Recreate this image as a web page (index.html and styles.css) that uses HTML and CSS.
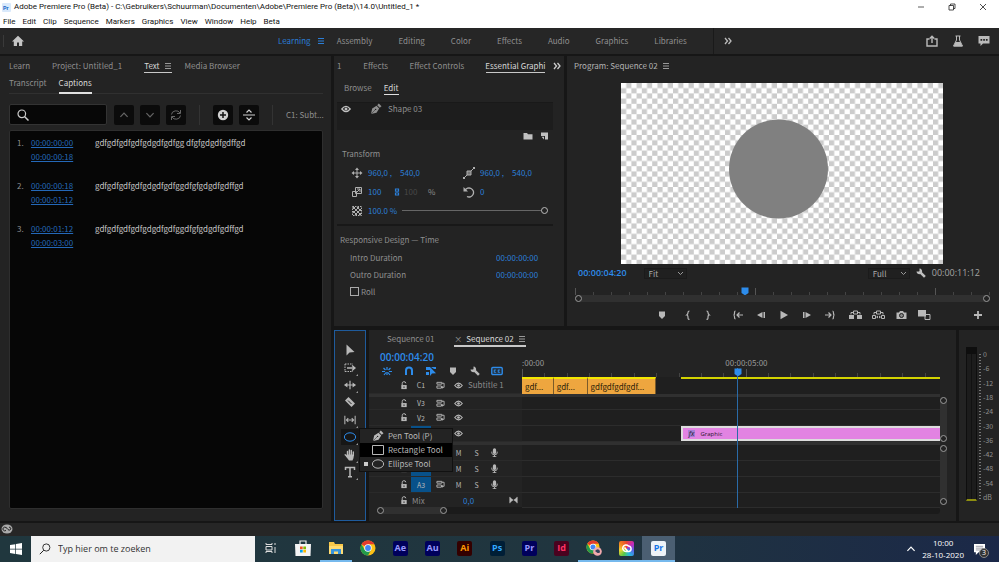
FILE: index.html
```html
<!DOCTYPE html>
<html lang="en">
  <head>
    <meta charset="UTF-8" />
    <meta name="viewport" content="width=device-width, initial-scale=1.0" />
    <title>Adobe Premiere Pro (Beta)</title>
    <link rel="stylesheet" href="styles.css">
  </head>
  <body>
    <svg class="sprite" aria-hidden="true">
      <symbol id="i-menu" viewBox="0 0 8 8"><path d="M1 1.500h6M1 4h6M1 6.500h6" stroke="currentColor" /></symbol>
      <symbol id="i-more" viewBox="0 0 8 8"><path d="M1 1l2.500 3L1 7M4.500 1L7 4 4.500 7" fill="none" stroke="currentColor" stroke-width="1.300" /></symbol>
      <symbol id="i-up" viewBox="0 0 10 10"><path d="M2 6.500l3-3 3 3" fill="none" stroke="currentColor" /></symbol>
      <symbol id="i-down" viewBox="0 0 10 10"><path d="M2 3.500l3 3 3-3" fill="none" stroke="currentColor" /></symbol>
      <symbol id="i-search" viewBox="0 0 12 12"><circle cx="4.800" cy="4.800" r="3.800" fill="none" stroke="currentColor" stroke-width="1.200" /><path d="M7.500 7.500L11.500 11.500" stroke="currentColor" stroke-width="1.500" /></symbol>
      <symbol id="i-eye" viewBox="0 0 10 10"><path d="M.8 5Q5-.2 9.200 5 5 10.200.8 5z" fill="none" stroke="currentColor" stroke-width="1.200" /><circle cx="5" cy="5" r="1.500" fill="currentColor" /></symbol>
      <symbol id="i-pen" viewBox="0 0 12 12"><path d="M1 11L2.200 5.500 6.500 2.800 9.200 5.500 6.500 9.800z" fill="currentColor" /><path d="M7.200 2.200L8.800.5 11.500 3.200 9.800 4.800z" fill="currentColor" /><path d="M1 11l4-4" stroke="#222" stroke-width=".5" /><circle cx="5.600" cy="6.400" r=".7" fill="#222" /></symbol>
      <symbol id="i-lock" viewBox="0 0 8 10"><path d="M2 4.500V3a2 2 0 0 1 4-.5" fill="none" stroke="currentColor" stroke-width="1.100" /><path d="M1 4.500h6V9H1z" fill="currentColor" /><path d="M4 6v1.800" stroke="#222" /></symbol>
      <symbol id="i-sync" viewBox="0 0 10 10"><path d="M1 1.500h5.500v2H1zM1 5.500h5v2.500H1zM6.500 2.500H9V7H6" fill="none" stroke="currentColor" /><path d="M5.500 7l2-1.500v3z" fill="currentColor" /></symbol>
      <symbol id="i-mic" viewBox="0 0 8 10"><rect x="2.200" y=".3" width="3.600" height="6.400" rx="1.800" fill="currentColor" /><path d="M1 4v1.500Q1 7.500 4 7.500T7 5.500V4M4 7.500V10M2 9.600h4" fill="none" stroke="currentColor" /></symbol>
      <symbol id="i-marker" viewBox="0 0 10 10"><path d="M2 1.500h6V6L5 9 2 6z" fill="currentColor" /></symbol>
      <symbol id="i-head" viewBox="0 0 8 8"><path d="M.5.5h7V6L4.500 8h-1L.5 6z" fill="currentColor" /></symbol>
      <symbol id="i-wrench" viewBox="0 0 10 10"><path d="M.5 3.500A2.800 2.800 0 0 0 4.200 6L8 9.800 9.800 8 6 4.200A2.800 2.800 0 0 0 3.500.5V3L3 3.500z" fill="currentColor" /></symbol>
      <symbol id="i-ellipse" viewBox="0 0 14 12"><ellipse cx="7" cy="6" rx="5.600" ry="4.200" fill="none" stroke="currentColor" /></symbol>
      <symbol id="i-chrome" viewBox="0 0 16 16"><circle cx="8" cy="8" r="7.500" fill="#fbc116" /><path d="M8 8L1.500 4.250A7.500 7.500 0 0 1 14.500 4.250H8z" fill="#e33b2e" /><path d="M1.500 4.250A7.500 7.500 0 0 0 8 15.500L11 10 4.750 10z" fill="#229a4c" /><circle cx="8" cy="8" r="3.700" fill="#fff" /><circle cx="8" cy="8" r="2.900" fill="#4285f4" /></symbol>
    </svg>

    <header class="titlebar">
      <svg class="app-icon" viewBox="0 0 9 9"><rect width="9" height="9" rx="1" fill="#d9e9fb" /><text x="1" y="6.500" font-size="5.500" font-weight="bold" fill="#1667c9">Pr</text></svg>
      <span class="title">Adobe Premiere Pro (Beta) - C:\Gebruikers\Schuurman\Documenten\Adobe\Premiere Pro (Beta)\14.0\Untitled_1 *</span>
      <button aria-label="Minimize"><svg viewBox="0 0 8 8"><path d="M1 4h6" stroke="#333" stroke-width=".8" /></svg></button>
      <button aria-label="Restore"><svg viewBox="0 0 8 8"><path d="M1 2.500h4.500V7H1zM2.500 2.500V1H7v4.500H5.500" fill="none" stroke="#222" stroke-width=".8" /></svg></button>
      <button aria-label="Close"><svg viewBox="0 0 8 8"><path d="M1 1l6 6M7 1L1 7" stroke="#222" stroke-width=".8" /></svg></button>
    </header>
    <nav class="menubar">
      <button>File</button><button>Edit</button><button>Clip</button><button>Sequence</button><button>Markers</button><button>Graphics</button><button>View</button><button>Window</button><button>Help</button><button>Beta</button>
    </nav>

    <nav class="workspaces">
      <button class="home" aria-label="Home"><svg viewBox="0 0 12 12"><path d="M6 .8L0 6.500h1.800V11H5V7.500h2V11h3.200V6.500H12z" fill="currentColor" /></svg></button>
      <div class="workspace-list">
        <button class="active">Learning <svg class="ic8"><use href="#i-menu" /></svg></button>
        <button>Assembly</button><button>Editing</button><button>Color</button><button>Effects</button><button>Audio</button><button>Graphics</button><button>Libraries</button>
      </div>
      <button class="overflow" aria-label="More workspaces"><svg class="ic8"><use href="#i-more" /></svg></button>
      <div class="quick">
        <button aria-label="Export"><svg viewBox="0 0 12 12"><path d="M3.500 4H1v7h10V4H8.500M6 8V1.500M3.800 3.500L6 1.200l2.200 2.300" fill="none" stroke="currentColor" stroke-width="1.400" /></svg></button>
        <button aria-label="Beta features"><svg viewBox="0 0 12 12"><path d="M3.500 1h5M4.500 1v4L1.500 11h9L7.500 5V1" fill="none" stroke="currentColor" /><path d="M3.500 7h5l2 4.500h-9z" fill="currentColor" /></svg></button>
        <button aria-label="Feedback"><svg viewBox="0 0 12 12"><path d="M.5 1h11v7.500H5L2.500 11V8.500h-2z" fill="currentColor" /><path d="M2.500 4h1.700v1.700H2.500zM5.200 4h1.700v1.700H5.200zM7.900 4h1.700v1.700H7.900z" fill="#222" /></svg></button>
      </div>
    </nav>

    <main class="workspace">
      <section class="panel text-panel">
        <div class="tabs text-tabs">
          <button>Learn</button>
          <button>Project: Untitled_1</button>
          <button class="active">Text <svg class="ic8"><use href="#i-menu" /></svg></button>
          <button>Media Browser</button>
        </div>
        <div class="subtabs">
          <button>Transcript</button>
          <button class="active">Captions</button>
        </div>
        <div class="caption-tools">
          <label class="search"><svg class="ic12"><use href="#i-search" /></svg><input type="search" aria-label="Search captions"></label>
          <button class="square dim" aria-label="Previous"><svg class="ic12"><use href="#i-up" /></svg></button>
          <button class="square dim" aria-label="Next"><svg class="ic12"><use href="#i-down" /></svg></button>
          <button class="square dim" aria-label="Replace"><svg class="ic12" viewBox="0 0 12 12"><path d="M1.500 5.500A4.500 4 0 0 1 10 4M10.500 6.500A4.500 4 0 0 1 2 8M10.500 1v3.500H7M1.500 11V7.500H5" fill="none" stroke="currentColor" /></svg></button>
          <span class="divider"></span>
          <button class="square" aria-label="Add caption"><svg class="ic12" viewBox="0 0 12 12"><circle cx="6" cy="6" r="5.200" fill="currentColor" /><path d="M6 3v6M3 6h6" stroke="#111" stroke-width="1.500" /></svg></button>
          <button class="square" aria-label="Split caption"><svg class="ic12" viewBox="0 0 12 12"><path d="M0 6h12M3.500 3.500L6 1l2.500 2.500M3.500 8.500L6 11l2.500-2.500" fill="none" stroke="currentColor" stroke-width="1.200" /></svg></button>
          <span class="divider"></span>
          <span class="track-name">C1: Subt...</span>
        </div>
        <ol class="captions">
          <li><span>1.</span><div class="times"><a href="#">00:00:00:00</a><a href="#">00:00:00:18</a></div><p>gdfgdfgdfgdfgdgdfgdfgg dfgfgdgdfgdffgd</p></li>
          <li><span>2.</span><div class="times"><a href="#">00:00:00:18</a><a href="#">00:00:01:12</a></div><p>gdfgdfgdfgdfgdgdfgdfggdfgfgdgdfgdffgd</p></li>
          <li><span>3.</span><div class="times"><a href="#">00:00:01:12</a><a href="#">00:00:03:00</a></div><p>gdfgdfgdfgdfgdgdfgdfggdfgfgdgdfgdffgd</p></li>
        </ol>
      </section>

      <div class="right-side">
        <div class="top-row">
          <section class="panel graphics-panel">
            <div class="tabs graphics-tabs">
              <button>1</button>
              <button>Effects</button>
              <button>Effect Controls</button>
              <button class="active">Essential Graphi</button>
              <button class="overflow" aria-label="More panels"><svg class="ic8"><use href="#i-more" /></svg></button>
            </div>
            <div class="subtabs small"><button>Browse</button><button class="active">Edit</button></div>
            <div class="layers">
              <button class="icon" aria-label="Toggle layer"><svg class="ic10"><use href="#i-eye" /></svg></button>
              <svg class="ic12"><use href="#i-pen" /></svg>
              <span>Shape 03</span>
            </div>
            <div class="layer-actions">
              <button class="icon" aria-label="New group"><svg class="ic10" viewBox="0 0 10 10"><path d="M.5 2h3.500l1 1.200h4.500V8.500h-9z" fill="currentColor" /></svg></button>
              <button class="icon" aria-label="New layer"><svg class="ic10" viewBox="0 0 10 10"><path d="M2 1.500h7v7H6V5H2z" fill="currentColor" /><path d="M2.500 5.800L5 8.500V5.800z" fill="currentColor" /></svg></button>
            </div>
            <h2>Transform</h2>
            <div class="transform">
              <svg class="ic12" viewBox="0 0 12 12"><path d="M6 2v8M2 6h8" stroke="currentColor" /><path d="M4 3l2-2.500L8 3zM4 9l2 2.500L8 9zM3 4L.5 6 3 8zM9 4l2.500 2L9 8z" fill="currentColor" /></svg>
              <div class="pair"><input type="text" value="960,0 ," aria-label="Position X"><input type="text" value="540,0" aria-label="Position Y"></div>
              <svg class="ic12" viewBox="0 0 12 12"><path d="M1 11l10-10" stroke="currentColor" /><path d="M4 4h4v4H4z" fill="#777" stroke="currentColor" /><path d="M10 0h2v2h-2zM0 10h2v2H0z" fill="currentColor" /></svg>
              <div class="pair"><input type="text" value="960,0 ," aria-label="Anchor X"><input type="text" value="540,0" aria-label="Anchor Y"></div>
              <svg class="ic12" viewBox="0 0 12 12"><path d="M4.500 1.500h6v6h-6zM1.500 5.500h4v5h-4zM5 7l4-4M6 3h3v3" fill="none" stroke="currentColor" /></svg>
              <div class="scale"><input type="text" value="100" aria-label="Scale"><svg class="link" viewBox="0 0 8 10"><path d="M2 4.500V1h4v3.500M2 5.500V9h4V5.500M4 3v4" fill="none" stroke="#2b7fd8" stroke-width="1.600" /></svg><input class="off" type="text" value="100" aria-label="Scale width" disabled><span>%</span></div>
              <svg class="ic12" viewBox="0 0 12 12"><path d="M2 4.500A4.500 4.500 0 1 1 4 10.500" fill="none" stroke="currentColor" stroke-width="1.300" /><path d="M.5 1v4.500H5z" fill="currentColor" /></svg>
              <input type="text" value="0" aria-label="Rotation">
              <svg class="ic12" viewBox="0 0 12 12"><path d="M2 2h2v2H2zM6 2h2v2H6zM4 4h2v2H4zM8 4h2v2H8zM2 6h2v2H2zM6 6h2v2H6zM4 8h2v2H4zM8 8h2v2H8z" fill="currentColor" /><path d="M1.500 1.500h9v9h-9z" fill="none" stroke="currentColor" stroke-dasharray="1.500 1" /></svg>
              <div class="opacity"><input type="text" value="100.0 %" aria-label="Opacity"><input type="range" value="100" aria-label="Opacity slider"></div>
            </div>
            <h2 class="responsive">Responsive Design — Time</h2>
            <div class="durations">
              <label for="intro">Intro Duration</label><input id="intro" type="text" value="00:00:00:00">
              <label for="outro">Outro Duration</label><input id="outro" type="text" value="00:00:00:00">
              <label class="roll"><input type="checkbox">Roll</label>
            </div>
          </section>

          <section class="panel program-panel">
            <div class="tabs program-tabs"><button class="title-tab">Program: Sequence 02 <svg class="ic8"><use href="#i-menu" /></svg></button></div>
            <svg class="monitor" viewBox="0 0 322 181">
              <defs>
                <pattern id="checker" width="10.400" height="10.400" patternUnits="userSpaceOnUse">
                  <rect width="10.400" height="10.400" fill="#fff" />
                  <path d="M5.200 0h5.200v5.200H5.200zM0 5.200h5.200v5.200H0z" fill="#ccc" />
                </pattern>
              </defs>
              <rect width="322" height="181" fill="url(#checker)" />
              <circle cx="157.500" cy="86" r="49.500" fill="#808080" />
            </svg>
            <div class="monitor-bar">
              <span class="timecode">00:00:04:20</span>
              <select class="zoom" aria-label="Zoom level"><option>Fit</option></select>
              <select class="resolution" aria-label="Playback resolution"><option>Full</option></select>
              <button class="icon" aria-label="Settings"><svg class="ic10"><use href="#i-wrench" /></svg></button>
              <span class="duration">00:00:11:12</span>
            </div>
            <div class="mini-ruler"><svg class="playhead"><use href="#i-head" /></svg></div>
            <div class="zoombar"><i></i><i></i></div>
            <div class="transport">
              <div class="transport-main">
                <button aria-label="Add marker"><svg><use href="#i-marker" /></svg></button>
                <div class="group tight">
                  <button aria-label="Mark in"><svg viewBox="0 0 10 10"><path d="M6.500 1Q5 1 5 2.500T3.800 5Q5 5 5 7.500T6.500 9" fill="none" stroke="currentColor" stroke-width="1.200" /></svg></button>
                  <button aria-label="Mark out"><svg viewBox="0 0 10 10"><path d="M3.500 1Q5 1 5 2.500T6.200 5Q5 5 5 7.500T3.500 9" fill="none" stroke="currentColor" stroke-width="1.200" /></svg></button>
                </div>
                <div class="group">
                  <button aria-label="Go to in"><svg viewBox="0 0 10 10"><path d="M2.500 1Q1.500 1 1.500 3T.5 5Q1.500 5 1.500 7T2.500 9M4 5h6M6.500 2.500L4 5l2.500 2.500" fill="none" stroke="currentColor" stroke-width="1.200" /></svg></button>
                  <button aria-label="Step back"><svg viewBox="0 0 10 10"><path d="M6.500 2v6L1 5zM7.500 2H9v6H7.500z" fill="currentColor" /></svg></button>
                  <button aria-label="Play"><svg viewBox="0 0 10 10"><path d="M1.500.8v8.400L9 5z" fill="currentColor" /></svg></button>
                  <button aria-label="Step forward"><svg viewBox="0 0 10 10"><path d="M3.500 2v6L9 5zM1 2h1.500v6H1z" fill="currentColor" /></svg></button>
                  <button aria-label="Go to out"><svg viewBox="0 0 10 10"><path d="M7.500 1q1 0 1 2t1 2q-1 0-1 2t-1 2M0 5h6M3.500 2.500L6 5 3.500 7.500" fill="none" stroke="currentColor" stroke-width="1.200" /></svg></button>
                </div>
                <div class="group wide">
                  <button aria-label="Lift"><svg viewBox="0 0 13 10"><path d="M0 5h5v4H0zM8 5h5v4H8z" fill="currentColor" /><path d="M4.500 1h4v3h-4zM2 4.500V2.500h2.500M11 4.500V2.500H8.500" fill="none" stroke="currentColor" /></svg></button>
                  <button aria-label="Extract"><svg viewBox="0 0 13 10"><path d="M.5 5.500h3v3h-3zM9.500 5.500h3v3h-3zM4.500 1h4v3h-4zM2 4.500V2.500h2.500M11 4.500V2.500H8.500" fill="none" stroke="currentColor" /><path d="M4 7l2-1.500v3zM9 7L7 5.500v3z" fill="currentColor" /></svg></button>
                  <button aria-label="Export frame"><svg viewBox="0 0 13 10"><path d="M1.500 2.500H4L5 1h3l1 1.500h2.500V9h-10z" fill="currentColor" /><circle cx="6.500" cy="5.500" r="2" fill="#888" stroke="#222" /></svg></button>
                  <button aria-label="Comparison view"><svg viewBox="0 0 13 10"><path d="M7 4.500h5v5H7z" fill="#222" stroke="currentColor" /><path d="M0 0h8v6.500H0z" fill="currentColor" /></svg></button>
                </div>
              </div>
              <button class="add" aria-label="Button editor"><svg viewBox="0 0 10 10"><path d="M5 1v8M1 5h8" stroke="currentColor" stroke-width="1.800" /></svg></button>
            </div>
          </section>
        </div>

        <div class="bottom-row">
          <section class="panel tools">
            <button aria-label="Selection tool"><svg viewBox="0 0 12 12"><path d="M2.500.5v11L5.500 8.500l5-.5z" fill="currentColor" /></svg></button>
            <button class="more" aria-label="Track select"><svg viewBox="0 0 12 12"><path d="M1 2h8M1 9.500h8" stroke="currentColor" stroke-dasharray="1.500 1" /><path d="M1 2v8" stroke="currentColor" stroke-dasharray="1.500 1" /><path d="M3 6h7M8 3.500L11 6 8 8.500" fill="none" stroke="currentColor" stroke-width="1.400" /></svg></button>
            <button class="more" aria-label="Ripple edit"><svg viewBox="0 0 14 12"><path d="M7 1v10M1 6h12" stroke="currentColor" stroke-width="1.400" /><path d="M0 6l4-3v6zM14 6l-4-3v6z" fill="currentColor" /></svg></button>
            <button aria-label="Razor"><svg viewBox="0 0 12 12"><path d="M1 4.500L4.500 1 11 7.500 7.500 11z" fill="currentColor" /><path d="M4 4.500L7.500 8" stroke="#222" /></svg></button>
            <button class="more" aria-label="Slip"><svg viewBox="0 0 14 12"><path d="M1 1v10M13 1v10M3 6h8M5 3.800L2.800 6 5 8.200M9 3.800L11.200 6 9 8.200" fill="none" stroke="currentColor" stroke-width="1.200" /></svg></button>
            <div class="tool-slot">
              <button class="more selected" aria-label="Shape tool"><svg><use href="#i-ellipse" /></svg></button>
              <div class="flyout">
                <button><i></i><svg><use href="#i-pen" /></svg>Pen Tool (P)</button>
                <button class="hover"><i></i><svg viewBox="0 0 14 12"><path d="M1.500 1.500h11v9h-11z" fill="none" stroke="currentColor" /></svg>Rectangle Tool</button>
                <button class="checked"><i></i><svg><use href="#i-ellipse" /></svg>Ellipse Tool</button>
              </div>
            </div>
            <button class="more" aria-label="Hand"><svg viewBox="0 0 12 12"><path d="M3.500 6V2.500M5.400 6V1M7.300 6V1.500M9.300 6.500V3M3.500 8L1.200 5.800" stroke="currentColor" stroke-width="1.400" stroke-linecap="round" /><path d="M2.800 5.500h7.200L9.500 9l-1 2.500H5L2 7.500z" fill="currentColor" /></svg></button>
            <button class="more" aria-label="Type"><svg viewBox="0 0 12 12"><path d="M1.500 4V1.500h9V4M6 1.500v9M4 10.700h4" fill="none" stroke="currentColor" stroke-width="1.500" /></svg></button>
          </section>

          <section class="panel timeline">
            <div class="tabs sequence-tabs">
              <button>Sequence 01</button>
              <button class="active"><b>×</b>Sequence 02 <svg class="ic8"><use href="#i-menu" /></svg></button>
            </div>
            <div class="timeline-body">
              <div class="heads">
                <div class="head-top">
                  <span class="timecode">00:00:04:20</span>
                  <div class="toggles">
                    <button aria-label="Nest"><svg viewBox="0 0 10 10"><path d="M5 1v3M1.500 2l2 2M8.500 2l-2 2M0 5.500h3M10 5.500H7M2 9l2-2.500M8 9L6 6.500M5 6v3" stroke="currentColor" stroke-width="1.200" /></svg></button>
                    <button aria-label="Snap"><svg viewBox="0 0 10 10"><path d="M2 9V4.500a3 3 0 0 1 6 0V9" fill="none" stroke="currentColor" stroke-width="2" /></svg></button>
                    <button aria-label="Linked selection"><svg viewBox="0 0 10 10"><path d="M0 1h4v3H0zM0 6h3v3H0zM5 1h5v2H8z" fill="currentColor" /><path d="M4 1v9l2-2.500 4-.3z" fill="currentColor" /></svg></button>
                    <button class="grey" aria-label="Marker"><svg><use href="#i-marker" /></svg></button>
                    <button class="grey" aria-label="Display settings"><svg><use href="#i-wrench" /></svg></button>
                    <button aria-label="Captions"><svg viewBox="0 0 12 10"><rect x=".8" y="1.500" width="10.400" height="7" rx="1" fill="none" stroke="currentColor" stroke-width="1.400" /><path d="M5.300 4H3.200v2.200h2.100M9.300 4H7.200v2.200h2.100" fill="none" stroke="currentColor" stroke-width="1.100" /></svg></button>
                  </div>
                </div>
                <div class="track"><svg class="lock"><use href="#i-lock" /></svg><span class="target off">C1</span><svg><use href="#i-sync" /></svg><svg><use href="#i-eye" /></svg><span class="name">Subtitle 1</span></div>
                <div class="split"></div>
                <div class="track short"><svg class="lock"><use href="#i-lock" /></svg><span class="target off">V3</span><svg><use href="#i-sync" /></svg><svg><use href="#i-eye" /></svg></div>
                <div class="track"><svg class="lock"><use href="#i-lock" /></svg><span class="target off">V2</span><svg><use href="#i-sync" /></svg><svg><use href="#i-eye" /></svg></div>
                <div class="track"><svg class="lock"><use href="#i-lock" /></svg><span class="target"></span><svg><use href="#i-sync" /></svg><svg><use href="#i-eye" /></svg></div>
                <div class="split"></div>
                <div class="track"><svg class="lock"><use href="#i-lock" /></svg><span class="target"></span><svg><use href="#i-sync" /></svg><button>M</button><button>S</button><svg><use href="#i-mic" /></svg></div>
                <div class="track"><svg class="lock"><use href="#i-lock" /></svg><span class="target">A2</span><svg><use href="#i-sync" /></svg><button>M</button><button>S</button><svg><use href="#i-mic" /></svg></div>
                <div class="track"><svg class="lock"><use href="#i-lock" /></svg><span class="target">A3</span><svg><use href="#i-sync" /></svg><button>M</button><button>S</button><svg><use href="#i-mic" /></svg></div>
                <div class="track mix"><svg class="lock"><use href="#i-lock" /></svg><span class="name">Mix</span><input type="text" value="0,0" aria-label="Mix volume"><svg viewBox="0 0 10 10"><path d="M1 1v7M9 1v7" stroke="currentColor" /><path d="M1 1.500l4 3 4-3v6l-4-3-4 3z" fill="currentColor" /></svg></div>
              </div>
              <div class="lanes">
                <div class="ruler"><span class="start">:00:00</span><span class="mark" style="left: 53.700%">00:00:05:00</span></div>
                <div class="lane subtitles">
                  <div class="caption-clip" style="width: 7.600%">gdf...</div>
                  <div class="caption-clip" style="width: 8.100%">gdf...</div>
                  <div class="caption-clip" style="width: 16.400%">gdfgdfgdfgdf...</div>
                  <div class="render" style="width: 62%"></div>
                </div>
                <div class="split"></div>
                <div class="lane short"></div>
                <div class="lane"></div>
                <div class="lane video"><div class="clip" style="width: 62%"><em>fx</em>Graphic</div></div>
                <div class="split"></div>
                <div class="lane"></div>
                <div class="lane"></div>
                <div class="lane"></div>
                <div class="lane mix"></div>
                <div class="time-head" style="left: 51.400%"><svg><use href="#i-head" /></svg></div>
              </div>
              <div class="scrolls">
                <div class="vscroll"><i></i><i></i></div>
                <div class="vscroll audio"><i></i><i></i></div>
              </div>
            </div>
            <div class="hscroll"><div class="thumb"><i></i><i></i></div></div>
          </section>

          <section class="panel meters">
            <div class="meter"></div>
            <div class="scale-ticks"></div>
            <div class="levels"><span>0</span><span>-6</span><span>-12</span><span>-18</span><span>-24</span><span>-30</span><span>-36</span><span>-42</span><span>-48</span><span>-54</span><span>dB</span></div>
          </section>
        </div>
      </div>
    </main>

    <footer class="status"><svg viewBox="0 0 12 10"><ellipse cx="6" cy="5" rx="5.500" ry="4.500" fill="#aaa" /><path d="M5 6.500a2 1.800 0 1 1 0-3q1 .5 2 2t2.500 0-1.500-2.500" fill="none" stroke="#222" /></svg></footer>

    <footer class="taskbar">
      <button class="start-button" aria-label="Start"><svg viewBox="0 0 12 12"><path d="M0 2l5.300-.8v4.500H0zM6 1l6-.9v5.600H6zM0 6.400h5.300v4.500L0 10.100zM6 6.400h6V12l-6-.9z" fill="#fff" /></svg></button>
      <label class="task-search"><svg viewBox="0 0 12 12"><circle cx="7.300" cy="4.500" r="3.600" fill="none" stroke="#222" stroke-width=".9" /><path d="M4.800 7.200L.8 11.200" stroke="#222" /></svg><input type="text" placeholder="Typ hier om te zoeken" aria-label="Search Windows"></label>
      <div class="apps">
        <button aria-label="Task view"><svg class="ic12" viewBox="0 0 12 12"><path d="M1 1v1.500h6V1M1 11V9.500h6V11M1 4.500h6v3.500H1zM10 1v2M10 5v6" fill="none" stroke="#ddd" /></svg></button>
        <button aria-label="Store"><svg viewBox="0 0 16 16"><path d="M5 4V1h6v3" fill="none" stroke="#eee" stroke-width="1.200" /><path d="M0 4h16l-.5 12H.5z" fill="#f4f4f4" /><path d="M5 6.500h2.700v2.700H5z" fill="#f25022" /><path d="M8.300 6.500H11v2.700H8.300z" fill="#7fba00" /><path d="M5 9.800h2.700v2.700H5z" fill="#00a4ef" /><path d="M8.300 9.800H11v2.700H8.300z" fill="#ffb900" /></svg></button>
        <button class="open" aria-label="Explorer"><svg viewBox="0 0 16 16"><path d="M1 2h5l1 2h8v10H1z" fill="#f8c84a" /><path d="M1 6h14v8H1z" fill="#ffdc73" /><path d="M3 9h10v5h-3v-2.500H6V14H3z" fill="#3795df" /></svg></button>
        <button aria-label="Chrome"><svg><use href="#i-chrome" /></svg></button>
        <button><b class="badge purple">Ae</b></button>
        <button><b class="badge purple">Au</b></button>
        <button><b class="badge orange">Ai</b></button>
        <button><b class="badge blue">Ps</b></button>
        <button><b class="badge purple">Pr</b></button>
        <button><b class="badge pink">Id</b></button>
        <button class="open" aria-label="Chrome profile"><svg viewBox="0 0 16 16"><use href="#i-chrome" width="14" height="14" /><circle cx="11.500" cy="11.500" r="4.300" fill="#f0a9ae" /><path d="M9 11q3-3.500 5 0l-.5 2h-2z" fill="#33415a" /></svg></button>
        <button class="open" aria-label="Creative Cloud"><span class="badge cloud"><svg viewBox="0 0 16 16"><path d="M8 11.500a3.300 3.300 0 1 1 2.500-5.500 2.800 2.800 0 0 1 .5 5.500zM9.500 11L6.500 7.500" fill="none" stroke="#fff" stroke-width="1.500" /></svg></span></button>
        <button class="open current"><b class="badge white">Pr</b></button>
      </div>
      <div class="tray">
        <button aria-label="Hidden icons"><svg class="ic12"><use href="#i-up" /></svg></button>
        <time>10:00<br>28-10-2020</time>
        <button class="notify" aria-label="3 notifications"><svg viewBox="0 0 12 12"><path d="M0 0h12v9H5l-3 3V9H0z" fill="#fff" /><path d="M2 2.500h8M2 4.500h8M2 6.500h5" stroke="#667" stroke-width=".7" /></svg><span>3</span></button>
      </div>
    </footer>
  </body>
</html>
```
FILE: styles.css
```css
* {
  box-sizing: border-box;
}
body {
  margin: 0;
  min-height: 100vh;
  display: flex;
  flex-direction: column;
  background: #161616;
  color: #8f8f8f;
  font-family: "Noto Sans CJK SC", Lato, sans-serif;
  font-size: 8px;
  line-height: 12px;
}
button, input, select {
  margin: 0;
  padding: 0;
  border: 0;
  background: none;
  color: inherit;
  font: inherit;
  min-width: 0;
}
button {
  display: flex;
  align-items: center;
  justify-content: center;
  white-space: nowrap;
}
svg {
  display: block;
  flex: none;
}
.sprite {
  position: absolute;
  width: 0;
  height: 0;
}
.ic8 { width: 8px; height: 8px; }
.ic10 { width: 10px; height: 10px; }
.ic12 { width: 12px; height: 12px; }

/* window chrome */
.titlebar,
.menubar {
  display: flex;
  align-items: center;
  height: 14px;
  background: #fff;
  color: #111;
  font-family: Roboto, sans-serif;
}
.titlebar {
  padding: 0 2px 0 2px;
  gap: 3px;
}
.titlebar .title {
  flex: 1;
}
.titlebar svg {
  width: 8px;
  height: 8px;
}
.titlebar .app-icon {
  width: 9px;
  height: 9px;
}
.titlebar button {
  width: 28px;
}
.menubar {
  padding: 2px 0 0 3px;
  gap: 7px;
}

.workspaces {
  display: flex;
  align-items: center;
  height: 28px;
  background: #262626;
  border-bottom: 2px solid #161616;
}
.home {
  width: 274px;
  padding-left: 8px;
  justify-content: flex-start;
  color: #c4c4c4;
}
.home::before {
  content: "";
  height: 12px;
  margin-left: -5px;
  border-left: 1px solid #3a3a3a;
  margin-right: 8px;
}
.home svg,
.quick svg {
  width: 12px;
  height: 12px;
}
.workspace-list {
  display: flex;
  gap: 26px;
  padding: 0 26px 0 4px;
}
.workspace-list .active {
  color: #2b7fd8;
  gap: 6px;
  margin-right: -14px;
}
.workspaces .overflow {
  padding-left: 10px;
  height: 26px;
  border-left: 1px solid #1a1a1a;
  color: #bbb;
}
.quick {
  margin-left: auto;
  display: flex;
  gap: 14px;
  padding-right: 9px;
  color: #bbb;
}

/* panels */
.workspace {
  flex: 1;
  display: grid;
  grid-template-columns: minmax(0, 331fr) minmax(0, 665fr);
  gap: 3px;
  padding-bottom: 2px;
}
.right-side {
  display: grid;
  grid-template-rows: 269fr 190fr;
  gap: 4px;
  min-width: 0;
}
.top-row {
  display: grid;
  grid-template-columns: 230px 1fr;
  gap: 3px;
}
.bottom-row {
  display: grid;
  grid-template-columns: 32px 1fr 40px;
  gap: 3px;
}
.panel {
  background: #232323;
  min-width: 0;
}
.tabs {
  display: flex;
  align-items: flex-start;
  height: 20px;
  padding-top: 3px;
}
.tabs button {
  height: 14px;
  border-bottom: 1px solid transparent;
}
.tabs .active {
  color: #d8d8d8;
  border-color: #c8c8c8;
}
.tabs .ic8 {
  margin-left: 4px;
  color: #999;
}
.icon {
  color: #c0c0c0;
}

/* captions */
.text-panel {
  display: flex;
  flex-direction: column;
  padding: 0 8px 12px 9px;
}
.text-tabs {
  gap: 22px;
  height: 18px;
}
.text-tabs .active {
  margin-right: -9px;
}
.subtabs {
  display: flex;
  gap: 12px;
  height: 20px;
  border-bottom: 1px solid #303030;
}
.subtabs button {
  height: 20px;
  border-bottom: 2px solid transparent;
}
.subtabs .active {
  color: #d8d8d8;
  border-color: #e0e0e0;
}
.caption-tools {
  display: flex;
  align-items: center;
  gap: 6px;
  padding: 10px 0 5px;
}
.search {
  display: flex;
  align-items: center;
  flex: none;
  width: 98px;
  height: 21px;
  margin-right: 1px;
  padding: 0 7px;
  border: 1px solid #333;
  border-radius: 2px;
  background: #070707;
  color: #ccc;
}
.search input {
  flex: 1;
}
.square {
  flex: none;
  width: 20px;
  height: 20px;
  border-radius: 2px;
  background: #0b0b0b;
  color: #d0d0d0;
}
.square.dim {
  color: #666;
}
.divider {
  height: 20px;
  margin: 0 7px;
  border-left: 1px solid #333;
}
.track-name {
  white-space: nowrap;
}
.captions {
  flex: 1;
  margin: 0;
  padding: 5px 7px;
  list-style: none;
  border: 1px solid #2e2e2e;
  border-radius: 2px;
  background: #060606;
  line-height: 14px;
}
.captions li {
  display: grid;
  grid-template-columns: 14px 64px 1fr;
  margin-bottom: 15px;
}
.captions a {
  display: block;
  color: #2468b8;
}
.captions p {
  margin: 0;
  color: #c8c8c8;
}

/* essential graphics */
.graphics-panel {
  padding: 0 11px 0 3px;
}
.graphics-tabs {
  gap: 22px;
  margin-right: -8px;
}
.graphics-tabs .overflow {
  margin-left: auto;
}
.graphics-tabs .active + .overflow {
  margin-left: -14px;
}
.graphics-tabs .overflow .ic8 {
  margin: 0;
  color: #ccc;
}
.subtabs.small {
  height: 26px;
  padding: 6px 7px 0;
  border: 0;
}
.subtabs.small button {
  height: 13px;
  border-bottom-width: 1px;
}
.layers {
  display: flex;
  align-items: flex-start;
  height: 28px;
  padding: 0 4px;
  background: #1d1d1d;
  border-top: 1px solid #191919;
}
.layers svg {
  margin-top: 1px;
}
.layers .ic12 {
  margin: 0 6px 0 19px;
}
.layer-actions {
  display: flex;
  justify-content: flex-end;
  gap: 6px;
  padding: 1px 4px;
}
.graphics-panel h2 {
  margin: 0;
  padding: 6px 5px 3px;
  font-size: 8px;
  font-weight: normal;
}
.transform {
  display: grid;
  grid-template-columns: 12px 90px 12px 1fr;
  grid-auto-rows: 19px;
  align-items: center;
  column-gap: 5px;
  padding: 0 5px 4px 14px;
  border-bottom: 2px solid #181818;
}
.transform > svg {
  color: #b0b0b0;
}
.transform input,
.durations input[type="text"],
.mix input {
  color: #2b7fd8;
}
.pair,
.scale,
.opacity {
  display: flex;
  align-items: center;
}
.pair input {
  width: 32px;
}
.scale input {
  width: 26px;
}
.scale .link {
  width: 6px;
  height: 10px;
  margin-right: 4px;
}
.transform input.off {
  color: #484848;
  width: 24px;
}
.opacity {
  grid-column: 2 / -1;
}
.opacity input[type="text"] {
  width: 34px;
}
.opacity input[type="range"] {
  flex: 1;
  height: 8px;
  appearance: none;
}
.opacity input::-webkit-slider-runnable-track {
  height: 1px;
  background: #666;
}
.opacity input::-webkit-slider-thumb {
  appearance: none;
  width: 7px;
  height: 7px;
  margin-top: -3px;
  border: 1px solid #bbb;
  border-radius: 50%;
  background: #232323;
}
.graphics-panel .responsive {
  padding: 8px 3px 3px;
}
.durations {
  display: grid;
  grid-template-columns: 1fr 57px;
  grid-auto-rows: 17px;
  align-items: center;
  padding-left: 13px;
}
.roll {
  display: flex;
  align-items: center;
  gap: 2px;
}
.roll input {
  appearance: none;
  width: 9px;
  height: 9px;
  border: 1px solid #aaa;
}

/* program monitor */
.program-panel {
  display: flex;
  flex-direction: column;
}
.program-tabs {
  padding-left: 7px;
}
.program-tabs .title-tab {
  color: #b4b4b4;
}
.monitor {
  margin: 7px 56px 0 54px;
}
.monitor-bar {
  display: flex;
  align-items: center;
  height: 18px;
  padding: 0 19px 0 11px;
}
.timecode {
  color: #2d8ceb;
  font: 600 9px/12px "Open Sans", sans-serif;
}
.monitor-bar select {
  height: 11px;
  padding: 0 4px;
  border: 1px solid #1b1b1b;
  background: #202020 url("data:image/svg+xml,%3Csvg xmlns='http://www.w3.org/2000/svg' width='7' height='5'%3E%3Cpath d='M1 1l2.500 2.500L6 1' fill='none' stroke='%23999'/%3E%3C/svg%3E") right 2px center no-repeat;
  color: #aaa;
  line-height: 9px;
  appearance: none;
}
.zoom {
  width: 43px;
  margin: 0 auto 0 17px;
}
.resolution {
  width: 42px;
  margin-right: 9px;
}
.monitor-bar .icon {
  margin-left: -3px;
}
.duration {
  margin-left: 6px;
  color: #a5a5a5;
  font: 9px/12px "Open Sans", sans-serif;
}
.mini-ruler {
  height: 13px;
  margin: 0 8px;
  position: relative;
  background:
    repeating-linear-gradient(90deg, #555 0 1px, transparent 1px 180px) 0 100% / 100% 7px no-repeat,
    repeating-linear-gradient(90deg, #444 0 1px, transparent 1px 18px) 0 100% / 100% 3px no-repeat;
}
.playhead {
  position: absolute;
  left: 40%;
  bottom: 0;
  width: 8px;
  height: 8px;
  color: #2d8ceb;
}
.zoombar,
.thumb {
  display: flex;
  justify-content: space-between;
  align-items: center;
  height: 7px;
  border-radius: 4px;
  background: #303030;
}
.zoombar {
  margin: 0 9px 0 8px;
}
.zoombar i,
.thumb i,
.vscroll i {
  width: 7px;
  height: 7px;
  border: 1px solid #999;
  border-radius: 50%;
  background: #232323;
}
.transport {
  display: grid;
  grid-template-columns: 1fr auto 1fr;
  padding: 3px 11px 0 31px;
  color: #b8b8b8;
}
.transport-main {
  grid-column: 2;
  display: flex;
  gap: 6px;
}
.transport button {
  width: 20px;
  height: 20px;
}
.transport svg {
  width: 10px;
  height: 10px;
}
.group {
  display: flex;
  gap: 3px;
}
.group.tight {
  gap: 0;
  margin-right: 4px;
}
.wide svg {
  width: 13px;
}
.add {
  justify-self: end;
}

/* tool palette */
.tools {
  display: flex;
  flex-direction: column;
  align-items: center;
  justify-content: space-between;
  padding: 11px 0 40px;
  border: 1px solid #1f5b9c;
  color: #b8b8b8;
}
.tools > button,
.tool-slot > button {
  position: relative;
  width: 18px;
  height: 16px;
}
.tools > button svg {
  width: 12px;
  height: 12px;
}
.more::after {
  content: "";
  position: absolute;
  right: 1px;
  bottom: 0;
  border: 1px solid #999;
  border-top-color: transparent;
  border-left-color: transparent;
}
.tool-slot {
  position: relative;
}
.tool-slot .selected {
  background: #161616;
  color: #2d8ceb;
}
.tool-slot svg {
  width: 14px;
  height: 12px;
}
.flyout {
  position: absolute;
  z-index: 2;
  top: -1px;
  left: 18px;
  width: 94px;
  border: 1px solid #111;
  background: #232323;
}
.flyout button {
  width: 100%;
  height: 14px;
  padding-left: 4px;
  gap: 3px;
  justify-content: flex-start;
}
.flyout i {
  width: 4px;
  height: 4px;
}
.flyout .checked i {
  background: #ccc;
}
.flyout .hover {
  background: #000;
}
.flyout svg {
  color: #b8b8b8;
}

/* timeline */
.timeline {
  display: flex;
  flex-direction: column;
}
.sequence-tabs {
  gap: 20px;
  padding: 2px 0 0 18px;
}
.sequence-tabs button {
  height: 15px;
}
.sequence-tabs .active {
  border-bottom-width: 2px;
}
.sequence-tabs b {
  margin-right: 4px;
  color: #999;
  font-weight: normal;
}
.timeline-body {
  display: grid;
  grid-template-columns: 153px 1fr 16px;
}
.head-top,
.ruler {
  height: 27px;
}
.head-top .timecode {
  display: block;
  padding-left: 11px;
  height: 14px;
  font-size: 10px;
  line-height: 15px;
}
.toggles {
  display: flex;
  gap: 2px;
  padding-left: 8px;
  color: #2d8ceb;
}
.toggles button {
  width: 20px;
  height: 13px;
}
.toggles svg {
  width: 10px;
  height: 10px;
}
.toggles button:last-child svg {
  width: 12px;
}
.toggles .grey {
  color: #b8b8b8;
}
.track {
  display: flex;
  align-items: center;
  height: 16px;
  padding-left: 31px;
  border-bottom: 1px solid #2a2a2a;
  color: #b8b8b8;
}
.track svg {
  width: 9px;
  height: 9px;
  margin-right: 9px;
}
.track .lock {
  width: 8px;
  margin-right: 3px;
}
.track button {
  width: 9px;
  margin-right: 9px;
  font-size: 7px;
}
.target {
  width: 20px;
  margin-right: 5px;
  align-self: stretch;
  display: flex;
  align-items: center;
  justify-content: center;
  background: #08518a;
  font-size: 7px;
}
.target.off {
  background: none;
}
.track .name {
  margin-left: -4px;
  color: #8a8a8a;
  white-space: nowrap;
}
.short {
  height: 13px;
}
.split {
  height: 3px;
  background: #303030;
}
.track.mix {
  height: 15px;
  border: 0;
}
.track.mix .name {
  margin-left: 1px;
}
.mix input {
  width: 44px;
  margin: 0 2px 0 auto;
}
.track.mix svg:last-child {
  margin-right: 4px;
}
.lanes {
  position: relative;
  min-width: 0;
}
.ruler {
  position: relative;
  color: #999;
  background:
    repeating-linear-gradient(90deg, #555 0 1px, transparent 1px 53.500%) 0 100% / 100% 8px no-repeat,
    repeating-linear-gradient(90deg, #444 0 1px, transparent 1px 5.350%) 0 100% / 100% 4px no-repeat;
}
.ruler span {
  position: absolute;
  top: 7px;
}
.ruler .mark {
  transform: translateX(-50%);
}
.lane {
  display: flex;
  height: 16px;
  border-bottom: 1px solid #2c2c2c;
  background: #1f1f1f;
}
.lane.short {
  height: 13px;
}
.lane.mix {
  height: 15px;
}
.subtitles {
  height: 17px;
  border: 0;
}
.heads .head-top + .track {
  height: 17px;
}
.caption-clip {
  padding: 1px 3px;
  overflow: hidden;
  border-top: 2px solid #f2e600;
  border-right: 1px solid #7a5a2a;
  background: #eea63f;
  color: #2a1c08;
  line-height: 14px;
  white-space: nowrap;
}
.render {
  height: 2px;
  margin-left: auto;
  background: #d2d200;
}
.clip {
  display: flex;
  align-items: center;
  gap: 5px;
  margin-left: auto;
  padding-left: 5px;
  border: 2px solid #ddd;
  border-right: 0;
  background: #e283e2;
  color: #2a162a;
  font: 6px/10px "Open Sans", sans-serif;
}
.clip em {
  padding: 0 1px;
  background: #a57fd6;
  font-size: 7px;
  line-height: 7px;
}
.time-head {
  position: absolute;
  top: 18px;
  bottom: 0;
  border-left: 1px solid #2a6ba8;
}
.time-head svg {
  width: 8px;
  height: 8px;
  margin-left: -4px;
  color: #2d8ceb;
}
.scrolls {
  padding-top: 47px;
}
.vscroll {
  display: flex;
  flex-direction: column;
  justify-content: space-between;
  width: 7px;
  height: 45px;
  margin-bottom: 3px;
  border-radius: 4px;
  background: #303030;
}
.vscroll.audio {
  height: 60px;
}
.hscroll {
  margin: -1px 16px 0 8px;
  border-radius: 4px;
  background: #1b1b1b;
}
.thumb {
  width: 70px;
}

/* audio meters */
.meters {
  display: flex;
  gap: 2px;
  padding: 17px 0 20px 7px;
}
.meter {
  width: 11px;
  border: 1px solid #0e0e0e;
  border-top-width: 7px;
  border-bottom: 2px solid #8e8e10;
  background: linear-gradient(90deg, transparent 4px, #111 4px 5px, transparent 5px) #1c1c1c;
}
.scale-ticks {
  width: 2px;
  margin-top: 7px;
  background: repeating-linear-gradient(#777 0 1px, transparent 1px 3px);
}
.levels {
  display: flex;
  flex-direction: column;
  justify-content: space-between;
  font-size: 7px;
  line-height: 8px;
  padding-top: 3px;
}

.status {
  height: 13px;
  padding: 1px 1px;
  background: #262626;
}
.status svg {
  width: 12px;
  height: 10px;
}

/* windows taskbar */
.taskbar {
  display: flex;
  height: 26px;
  background: linear-gradient(90deg, #20373e, #20353f 60%, #1b2848);
  color: #fff;
  font-family: "Open Sans", sans-serif;
}
.start-button {
  width: 31px;
}
.start-button svg {
  width: 12px;
  height: 12px;
}
.task-search {
  display: flex;
  align-items: center;
  gap: 7px;
  width: 224px;
  padding-left: 8px;
  background: #f2f2f2;
  color: #333;
  font-size: 9px;
}
.task-search svg {
  width: 12px;
  height: 12px;
}
.task-search input {
  flex: 1;
}
.task-search input::placeholder {
  color: #333;
}
.apps {
  display: flex;
  width: 42%;
}
.apps > button {
  flex: 1;
  border-bottom: 2px solid transparent;
}
.apps .open {
  border-color: #76b9ed;
  background-clip: padding-box;
}
.apps .current {
  background-color: #4b5f72;
}
.apps svg {
  width: 16px;
  height: 16px;
}
.apps svg.ic12 {
  width: 12px;
  height: 12px;
}
.badge {
  display: flex;
  align-items: center;
  justify-content: center;
  width: 15px;
  height: 15px;
  border-radius: 2px;
  font-size: 9px;
}
.purple { background: #00005b; color: #9999ff; }
.orange { background: #330000; color: #ff9a00; }
.blue { background: #001e36; color: #31a8ff; }
.pink { background: #49021f; color: #ff3366; }
.white { background: #eef3f8; color: #1473e6; }
.cloud {
  background: conic-gradient(#e8452f, #c52ab8, #5b5be8, #24b9e0, #58c846, #f2d22e, #f07f22, #e8452f);
}
.tray {
  display: flex;
  align-items: center;
  margin-left: auto;
  gap: 5px;
  padding-right: 14px;
}
.tray time {
  text-align: center;
}
.notify {
  position: relative;
  margin-left: 5px;
}
.notify svg {
  width: 11px;
  height: 11px;
}
.notify span {
  position: absolute;
  left: 5px;
  top: 4px;
  width: 10px;
  height: 10px;
  border: 1px solid #888;
  border-radius: 50%;
  background: #333;
  font-size: 7px;
  line-height: 8px;
}
```
